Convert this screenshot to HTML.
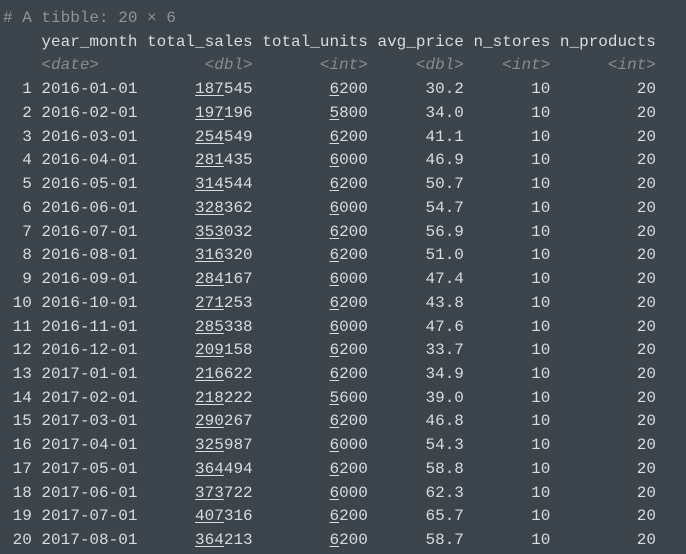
<!DOCTYPE html>
<html><head><meta charset="utf-8"><style>
html,body{margin:0;padding:0;background:#3c454c;width:686px;height:554px;overflow:hidden}
pre{margin:0;position:absolute;left:3px;top:7px;font-family:"Liberation Mono",monospace;font-size:16px;line-height:23.74px;color:#d8dcdf;letter-spacing:0}
.c{color:#8d959b}
.t{color:#858d93;font-style:italic}
u{text-decoration:underline;text-underline-offset:2px}
</style></head><body>
<pre><span class="c"># A tibble: 20 × 6</span>
    year_month total_sales total_units avg_price n_stores n_products
<span class="t">    &lt;date&gt;           &lt;dbl&gt;       &lt;int&gt;     &lt;dbl&gt;    &lt;int&gt;      &lt;int&gt;</span>
  1 2016-01-01      <u>187</u>545        <u>6</u>200      30.2       10         20
  2 2016-02-01      <u>197</u>196        <u>5</u>800      34.0       10         20
  3 2016-03-01      <u>254</u>549        <u>6</u>200      41.1       10         20
  4 2016-04-01      <u>281</u>435        <u>6</u>000      46.9       10         20
  5 2016-05-01      <u>314</u>544        <u>6</u>200      50.7       10         20
  6 2016-06-01      <u>328</u>362        <u>6</u>000      54.7       10         20
  7 2016-07-01      <u>353</u>032        <u>6</u>200      56.9       10         20
  8 2016-08-01      <u>316</u>320        <u>6</u>200      51.0       10         20
  9 2016-09-01      <u>284</u>167        <u>6</u>000      47.4       10         20
 10 2016-10-01      <u>271</u>253        <u>6</u>200      43.8       10         20
 11 2016-11-01      <u>285</u>338        <u>6</u>000      47.6       10         20
 12 2016-12-01      <u>209</u>158        <u>6</u>200      33.7       10         20
 13 2017-01-01      <u>216</u>622        <u>6</u>200      34.9       10         20
 14 2017-02-01      <u>218</u>222        <u>5</u>600      39.0       10         20
 15 2017-03-01      <u>290</u>267        <u>6</u>200      46.8       10         20
 16 2017-04-01      <u>325</u>987        <u>6</u>000      54.3       10         20
 17 2017-05-01      <u>364</u>494        <u>6</u>200      58.8       10         20
 18 2017-06-01      <u>373</u>722        <u>6</u>000      62.3       10         20
 19 2017-07-01      <u>407</u>316        <u>6</u>200      65.7       10         20
 20 2017-08-01      <u>364</u>213        <u>6</u>200      58.7       10         20</pre>
</body></html>
